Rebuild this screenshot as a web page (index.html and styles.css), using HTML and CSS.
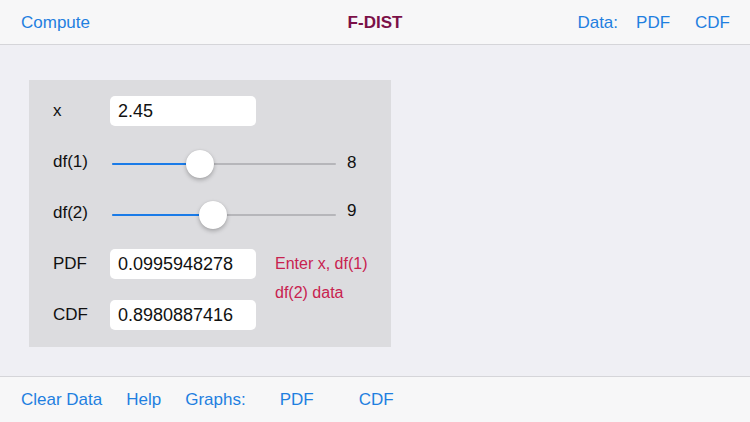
FILE: index.html
```html
<!DOCTYPE html>
<html>
<head>
<meta charset="utf-8">
<link rel="stylesheet" href="styles.css">
</head>
<body>
<div class="app">
  <header class="topbar">
    <span class="link">Compute</span>
    <span class="title">F-DIST</span>
    <nav class="right">
      <span class="link">Data:</span>
      <span class="link pdf">PDF</span>
      <span class="link cdf">CDF</span>
    </nav>
  </header>
  <main class="main">
    <section class="panel">
      <div class="row">
        <span class="label">x</span>
        <div class="field">2.45</div>
      </div>
      <div class="row">
        <span class="label">df(1)</span>
        <div class="slider">
          <div class="fill" style="width:88px"></div>
          <div class="thumb" style="left:74px"></div>
        </div>
        <span class="value">8</span>
      </div>
      <div class="row">
        <span class="label">df(2)</span>
        <div class="slider">
          <div class="fill" style="width:101px"></div>
          <div class="thumb" style="left:87px"></div>
        </div>
        <span class="value v2">9</span>
      </div>
      <div class="results">
        <span class="label">PDF</span>
        <div class="field">0.0995948278</div>
        <div class="note">Enter x, df(1)<br>df(2) data</div>
        <span class="label">CDF</span>
        <div class="field">0.8980887416</div>
      </div>
    </section>
  </main>
  <footer class="bottombar">
    <span class="link">Clear Data</span>
    <span class="link">Help</span>
    <span class="link">Graphs:</span>
    <span class="link gpdf">PDF</span>
    <span class="link gcdf">CDF</span>
  </footer>
</div>
</body>
</html>
```
FILE: styles.css
```css
* { box-sizing: border-box; }
html, body { margin: 0; padding: 0; }
body {
  width: 750px;
  height: 422px;
  overflow: hidden;
  background: #efeff4;
  font-family: "Liberation Sans", Arial, sans-serif;
  font-size: 17px;
  color: #111;
}
.app {
  display: flex;
  flex-direction: column;
  height: 422px;
}
.topbar {
  height: 45px;
  flex: none;
  background: #f7f7f8;
  border-bottom: 1px solid #d5d5d9;
  display: flex;
  align-items: center;
  padding: 1px 20px 0 21px;
  position: relative;
}
.link { color: #1f7fe0; }
.title {
  position: absolute;
  left: 0;
  right: 0;
  text-align: center;
  font-weight: bold;
  color: #7b1048;
  pointer-events: none;
}
.right {
  margin-left: auto;
  display: flex;
}
.right .pdf { margin-left: 18px; }
.right .cdf { margin-left: 25px; }
.main {
  flex: 1;
  padding: 35px 0 0 29px;
}
.panel {
  width: 362px;
  height: 267px;
  background: #dcdcdf;
  padding: 16px 0 0 24px;
  display: flex;
  flex-direction: column;
  gap: 21px;
}
.row {
  height: 30px;
  display: flex;
  align-items: center;
}
.label {
  width: 57px;
  flex: none;
  color: #111;
}
.field {
  width: 146px;
  height: 30px;
  background: #fff;
  border-radius: 5px;
  font-size: 18px;
  line-height: 30px;
  padding-left: 8px;
  color: #111;
}
.slider {
  position: relative;
  width: 224px;
  height: 30px;
  margin-left: 2px;
  margin-top: 3px;
}
.slider::before {
  content: "";
  position: absolute;
  left: 0;
  right: 0;
  top: 14px;
  height: 2px;
  background: #b6b6ba;
  border-radius: 1px;
}
.fill {
  position: absolute;
  left: 0;
  top: 14px;
  height: 2px;
  background: #1a7be8;
  border-radius: 1px;
}
.thumb {
  position: absolute;
  top: 1px;
  width: 28px;
  height: 28px;
  border-radius: 50%;
  background: #fff;
  box-shadow: 0 2px 4px rgba(0,0,0,0.25), 0 0 1px rgba(0,0,0,0.15);
}
.value {
  margin-left: 11px;
  margin-top: 2px;
}
.value.v2 { margin-top: -4px; }
.results {
  display: grid;
  grid-template-columns: 57px 146px auto;
  grid-template-rows: 30px 30px;
  row-gap: 21px;
  align-items: center;
}
.note {
  grid-column: 3;
  grid-row: 1 / span 2;
  align-self: start;
  margin-left: 19px;
  font-size: 16px;
  line-height: 29px;
  color: #c8224f;
}
.bottombar {
  height: 46px;
  flex: none;
  background: #f7f7f8;
  border-top: 1px solid #d5d5d9;
  display: flex;
  align-items: center;
  gap: 24px;
  padding: 0 21px;
}
.bottombar .gpdf { margin-left: 10px; }
.bottombar .gcdf { margin-left: 21px; }
```
